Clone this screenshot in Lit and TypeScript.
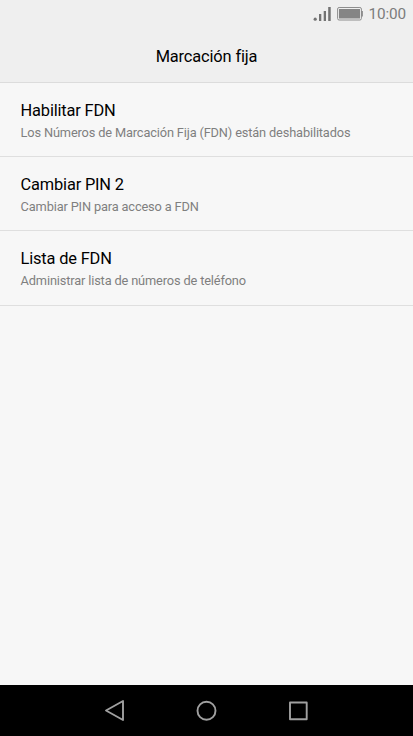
import { LitElement, html, css } from "lit";
import { customElement } from "lit/decorators.js";

const items = [
  ["Habilitar FDN", "Los Números de Marcación Fija (FDN) están deshabilitados"],
  ["Cambiar PIN 2", "Cambiar PIN para acceso a FDN"],
  ["Lista de FDN", "Administrar lista de números de teléfono"],
];

@customElement("app-root")
class AppRoot extends LitElement {
  static styles = css`
    :host { display: flex; flex-direction: column; height: 736px; background: #f7f7f7; font-family: Roboto, sans-serif; color: #000; }
    .status { height: 29px; background: #efefef; display: flex; align-items: flex-start; justify-content: flex-end; color: #7c7c7c; font-size: 15.3px; padding-right: 7px; box-sizing: border-box; }
    .clock { line-height: 28px; margin-left: 5px; letter-spacing: -0.1px; }
    .header { height: 54px; background: #efefef; border-bottom: 1px solid #dcdcdc; box-sizing: border-box; text-align: center; font-size: 16.4px; letter-spacing: -0.14px; line-height: 55px; }
    .item { height: 74.2px; box-sizing: border-box; border-bottom: 1px solid #dfdfdf; padding: 17px 20.6px 0; }
    .title { font-size: 16.4px; line-height: 22px; letter-spacing: -0.17px; }
    .sub { font-size: 12.8px; line-height: 18px; margin-top: 2px; letter-spacing: -0.15px; color: #7f7f7f; white-space: nowrap; }
    .list { flex: 1; }
    .nav { height: 51px; background: #000; }
    svg { display: block; }
  `;
  render() {
    return html`
      <div class="status">
        <svg width="50" height="28" viewBox="313 0 50 28" fill="#737373">
          <path d="M319 14h2.300v7h-2.300zM323.700 11h2.300v10h-2.300zM328.200 7h2.500v14h-2.500z"/>
          <circle cx="315.200" cy="19.200" r="1.600"/>
          <rect x="337.600" y="7.500" width="23.800" height="12.500" rx="1.500" fill="none" stroke="#8e8e8e"/>
          <rect x="339" y="9" width="21" height="9.500" fill="#858585"/>
          <rect x="361.500" y="11" width="1.300" height="5.500" fill="#808080"/>
        </svg>
        <span class="clock">10:00</span>
      </div>
      <div class="header">Marcación fija</div>
      <div class="list">${items.map(([t, s]) => html`<div class="item"><div class="title">${t}</div><div class="sub">${s}</div></div>`)}</div>
      <div class="nav">
        <svg width="413" height="51" viewBox="0 685 413 51" fill="none" stroke="#a0a0a0" stroke-width="1.900" stroke-linejoin="round">
          <path d="M123 701v19L106 710.500z"/><circle cx="206.500" cy="710.700" r="9"/><rect x="290" y="702.500" width="16.700" height="16.700"/>
        </svg>
      </div>`;
  }
}
